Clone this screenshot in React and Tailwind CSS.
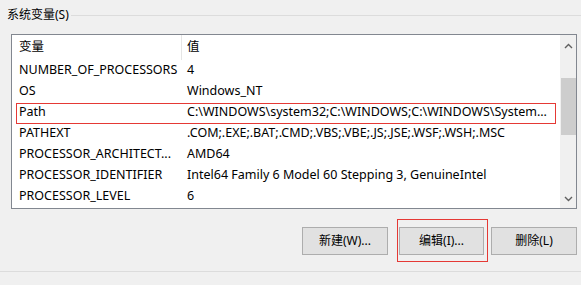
import React from 'react';

const rows = [
  ['NUMBER_OF_PROCESSORS', '4'],
  ['OS', 'Windows_NT'],
  ['Path', 'C:\\WINDOWS\\system32;C:\\WINDOWS;C:\\WINDOWS\\System...'],
  ['PATHEXT', '.COM;.EXE;.BAT;.CMD;.VBS;.VBE;.JS;.JSE;.WSF;.WSH;.MSC'],
  ['PROCESSOR_ARCHITECT...', 'AMD64'],
  ['PROCESSOR_IDENTIFIER', 'Intel64 Family 6 Model 60 Stepping 3, GenuineIntel'],
  ['PROCESSOR_LEVEL', '6'],
];

const font = { fontFamily: '"Noto Sans", "Noto Sans CJK SC", sans-serif' };

const Chevron = ({ down }) => (
  <svg width="9" height="6" viewBox="0 0 9 6" className="block">
    <path
      d={down ? 'M1 1 L4.5 4.5 L8 1' : 'M1 5 L4.5 1.5 L8 5'}
      fill="none"
      stroke="#606060"
      strokeWidth="1.4"
    />
  </svg>
);

const Button = ({ children, className }) => (
  <button
    className={`h-[28px] border border-[#adadad] bg-[#e1e1e1] text-[12px] text-black leading-none ${className}`}
  >
    {children}
  </button>
);

export default function App() {
  return (
    <div className="w-[581px] h-[285px] bg-[#f0f0f0] overflow-hidden text-[12px] text-black" style={font}>
      {/* group title */}
      <div className="flex items-center h-[30px]">
        <span className="pl-[7px] pr-[2px] leading-none">系统变量(S)</span>
        <div className="flex-1 h-px bg-[#dcdcdc] mt-[1px]" />
      </div>

      {/* list view */}
      <div className="ml-[11px] mt-[4px] w-[566px] h-[175px] border border-[#828790] bg-white flex text-[12.5px]">
        <div className="flex-1 flex flex-col">
          <div className="h-[25px] flex items-center">
            <div className="w-[170px] pl-[7px] h-full flex items-center border-r border-[#e5e5e5]">变量</div>
            <div className="pl-[5px]">值</div>
          </div>
          {rows.map(([name, value]) => (
            <div key={name} className="relative h-[21px] flex items-center whitespace-nowrap">
              <div className="w-[170px] pl-[7px]">{name}</div>
              <div className="pl-[5px]">{value}</div>
              {name === 'Path' && (
                <div className="absolute top-[1px] left-[4px] w-[540px] h-[21px] border border-[#e53935]" />
              )}
            </div>
          ))}
        </div>
        <div className="w-[17px] bg-[#f0f0f0] flex flex-col items-center border-l border-white">
          <div className="h-[17px] flex items-center justify-center mt-[2px]">
            <Chevron />
          </div>
          <div className="mt-[24px] w-[15px] h-[57px] bg-[#cdcdcd]" />
          <div className="flex-1" />
          <div className="h-[17px] flex items-center justify-center mb-[1px]">
            <Chevron down />
          </div>
        </div>
      </div>

      {/* buttons */}
      <div className="flex mt-[18px]">
        <Button className="ml-[302px] w-[86px]">新建(W)...</Button>
        <div className="relative ml-[11px]">
          <div className="absolute -top-[8px] -left-[2px] w-[91px] h-[43px] border border-[#e53935]" />
          <Button className="w-[85px]">编辑(I)...</Button>
        </div>
        <Button className="ml-[7px] w-[86px]">删除(L)</Button>
      </div>

      <div className="mt-[16px] h-px bg-[#dcdcdc]" />
    </div>
  );
}
